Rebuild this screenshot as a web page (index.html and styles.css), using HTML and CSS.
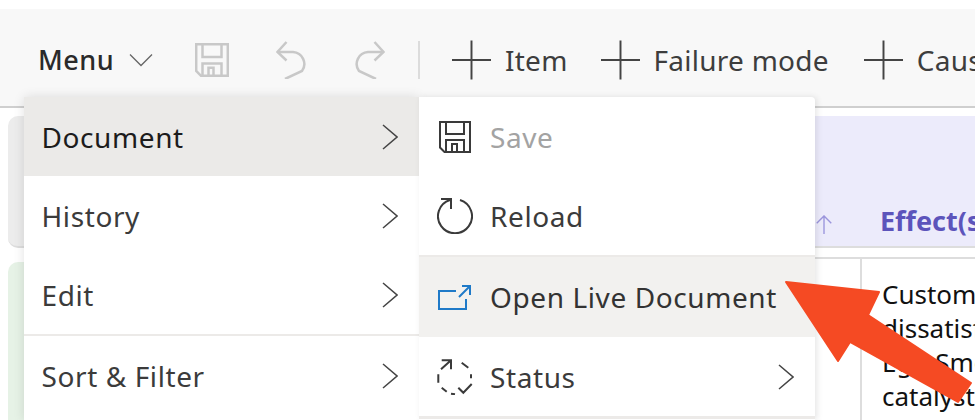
FILE: index.html
```html
<!DOCTYPE html>
<html lang="en">
<head>
<meta charset="utf-8">
<title>Menu</title>
<link rel="stylesheet" href="styles.css">
</head>
<body>
<div class="page">
  <header class="toolbar">
    <button class="menu-btn">Menu
      <svg class="chev-down" viewBox="0 0 24 14"><path d="M1 1.500 12 12.500 23 1.500"/></svg>
    </button>
    <svg class="tool-icon save-top" viewBox="0 0 34 34"><path d="M1.200 1.200h31.600v31.600H6L1.200 28z"/><path d="M7.500 1.200v12.800h19V1.200M7.500 32.800V20.500h19v12.300M13.500 32.800v-8h5v8"/></svg>
    <svg class="tool-icon undo" viewBox="0 0 30 38"><path d="M1.500 11H17a12 12 0 0 1 9 19L9 38"/><path d="M10.500 1 1.500 11l9 8.500"/></svg>
    <svg class="tool-icon redo" viewBox="0 0 30 38"><path d="M28.500 11H13a12 12 0 0 0-9 19l17 8"/><path d="M19.500 1l9 10-9 8.500"/></svg>
    <span class="tool-sep"></span>
    <div class="add add-item"><svg class="plus" viewBox="0 0 40 40"><path d="M0 20h40M20 0v40"/></svg>Item</div>
    <div class="add add-failure"><svg class="plus" viewBox="0 0 40 40"><path d="M0 20h40M20 0v40"/></svg>Failure mode</div>
    <div class="add add-cause"><svg class="plus" viewBox="0 0 40 40"><path d="M0 20h40M20 0v40"/></svg>Cause</div>
  </header>
  <main class="sheet">
    <div class="head-row">
      <div class="head-left"></div>
      <div class="head-right">
        <svg class="sort-up" viewBox="0 0 18 22"><path d="M9 21V1M1 9l8-8 8 8"/></svg>
        <span class="effect">Effect(s)</span>
      </div>
    </div>
    <div class="body-row">
      <div class="body-left"></div>
      <div class="cell-blank"></div>
      <div class="cell-text">Customer<br>dissatisfied<br>Egg Smell<br>catalyst</div>
    </div>
  </main>
  <nav class="menu primary">
    <div class="menu-item active">Document<svg class="chev" viewBox="0 0 16 26"><path d="M1 1l14 12L1 25"/></svg></div>
    <div class="menu-item history">History<svg class="chev" viewBox="0 0 16 26"><path d="M1 1l14 12L1 25"/></svg></div>
    <div class="menu-item edit">Edit<svg class="chev" viewBox="0 0 16 26"><path d="M1 1l14 12L1 25"/></svg></div>
    <div class="menu-item ruled">Sort &amp; Filter<svg class="chev" viewBox="0 0 16 26"><path d="M1 1l14 12L1 25"/></svg></div>
  </nav>
  <nav class="menu secondary">
    <div class="menu-item sub muted">
      <svg class="sub-icon" viewBox="0 0 36 36"><path d="M3 3h30v30H7.500L3 28.500z"/><path d="M9 3v12h18V3M9 33V21h18v12M15 33v-8h5v8"/></svg>Save</div>
    <div class="menu-item sub">
      <svg class="sub-icon" viewBox="0 0 36 36"><path d="M23 2A17 17 0 1 1 13 2"/><path d="M4 1h10v10"/></svg>Reload</div>
    <div class="menu-item sub live">
      <svg class="sub-icon" viewBox="0 0 36 36"><path d="M19 12H2v18h27V20"/><path d="M22 18 33 7M25 7h8v9"/></svg>Open Live Document</div>
    <div class="menu-item sub status">
      <svg class="sub-icon" viewBox="0 0 36 36"><path d="M24.700 3.700 31.300 8.700M34 15.300v4M1.300 15.300v8.400M4.700 28.700l5 4M14 34.700l4 .6"/><path d="M4.700 1.300H14v9M4 10.300l10-9M21.300 28.700l5 5 8.400-8.700"/></svg>Status<svg class="chev" viewBox="0 0 16 26"><path d="M1 1l14 12L1 25"/></svg></div>
    <div class="sub-rest"></div>
  </nav>
  <svg class="pointer" viewBox="0 0 975 420"><path d="M786 282 879 292 868 315 971 383 958 402 850 342 838 361Z"/></svg>
</div>
</body>
</html>
```
FILE: styles.css
```css
* { box-sizing: border-box; }
html, body { margin: 0; padding: 0; }
body {
  width: 975px;
  height: 420px;
  overflow: hidden;
  background: #fff;
  font-family: "Noto Sans", "Open Sans", sans-serif;
  color: #333;
}
.page { position: relative; width: 975px; height: 420px; overflow: hidden; padding-top: 9px; }

.toolbar {
  height: 99px;
  display: flex;
  align-items: center;
  background: #f8f8f8;
  border-bottom: 2px solid #cfcfcf;
  padding: 4px 0 0 38px;
  white-space: nowrap;
}
.menu-btn {
  display: flex;
  align-items: center;
  gap: 15px;
  border: 0;
  background: none;
  padding: 0;
  font: 500 27px "Noto Sans", sans-serif;
  letter-spacing: .5px;
  color: #2a2a2a;
  width: 115px;
  flex: none;
}
.chev-down { width: 24px; height: 14px; fill: none; stroke: #666; stroke-width: 1.300; margin-top: 1px; flex: none; }
.tool-icon { fill: none; stroke: #c8c8c8; stroke-width: 2.500; flex: none; }
.save-top { width: 34px; height: 34px; margin-left: 42px; }
.undo { width: 30px; height: 38px; margin-left: 47px; }
.redo { width: 30px; height: 38px; margin-left: 49px; }
.tool-sep { width: 2px; height: 38px; background: #dcdcdc; margin-left: 33px; flex: none; }
.add { display: flex; align-items: center; gap: 14px; font-size: 28px; letter-spacing: .25px; color: #3d3d3d; flex: none; }
.add-item { margin-left: 32px; }
.add-failure { margin-left: 33px; }
.add-cause { margin-left: 35px; }
.plus { width: 39px; height: 40px; fill: none; stroke: #444; stroke-width: 2; flex: none; }

.sheet { padding: 8px 0 0 8px; }
.head-row { display: flex; height: 132px; }
.head-left { width: 400px; background: #ececec; border-radius: 10px 0 0 10px; border-bottom: 2px solid #ddd; flex: none; }
.head-right {
  flex: 1;
  background: #ecebfb;
  border-bottom: 2px solid #ddd;
  padding-left: 407px;
  display: flex;
  align-items: flex-end;
  gap: 47px;
  padding-bottom: 8px;
}
.sort-up { width: 18px; height: 20px; fill: none; stroke: #9b95dc; stroke-width: 1.500; margin-bottom: 3px; flex: none; }
.effect { font-weight: 700; font-size: 27px; color: #5c54bb; white-space: nowrap; line-height: 34px; }

.body-row { display: flex; margin-top: 9px; height: 170px; }
.body-left { width: 40px; margin-top: 5px; background: #e6f2e6; border-radius: 10px 0 0 0; flex: none; }
.cell-blank { flex: 1; border-top: 2px solid #ddd; }
.cell-text {
  width: 115px;
  flex: none;
  border-left: 2px solid #ddd;
  border-top: 2px solid #ddd;
  padding: 18px 0 0 20px;
  font-size: 26px;
  line-height: 34px;
  color: #111;
  white-space: nowrap;
  overflow: hidden;
}

.menu {
  position: absolute;
  top: 97px;
  width: 396px;
  height: 323px;
  background: #fff;
  display: flex;
  flex-direction: column;
}
.primary { left: 24px; width: 395px; box-shadow: 0 0 12px rgba(0,0,0,.12); border-radius: 4px 0 0 0; }
.secondary { left: 419px; box-shadow: 2px 0 6px rgba(0,0,0,.10); border-radius: 0 4px 0 0; }
.menu-item {
  height: 79px;
  flex: none;
  display: flex;
  align-items: center;
  padding: 0 21px 0 17.500px;
  font-size: 28px;
  letter-spacing: .6px;
  color: #3b3b3b;
}
.menu-item .chev { margin-left: auto; }
.active { background: #ebeae8; color: #1c1c1c; }
.history { height: 80px; }
.edit { height: 78px; }
.ruled { border-top: 2px solid #eceae8; height: 82px; }
.chev { width: 16px; height: 26px; fill: none; stroke: #444; stroke-width: 1.500; flex: none; }
.sub { padding: 0 21px 0 18px; }
.sub-icon { width: 36px; height: 36px; fill: none; stroke: #3a3a3a; stroke-width: 2; flex: none; margin-right: 17px; }
.muted { color: #a3a3a3; }
.live { background: #f2f1ef; border-top: 2px solid #eceae8; height: 82px; color: #333; }
.live .sub-icon { stroke: #1f7ac8; }
.status { height: 79px; }
.sub-rest { border-top: 3px solid #eceae8; flex: 1; }

.pointer { position: absolute; inset: 0; width: 975px; height: 420px; pointer-events: none; }
.pointer path { fill: #f54a23; stroke: #f54a23; stroke-width: 2; stroke-linejoin: round; }
```
